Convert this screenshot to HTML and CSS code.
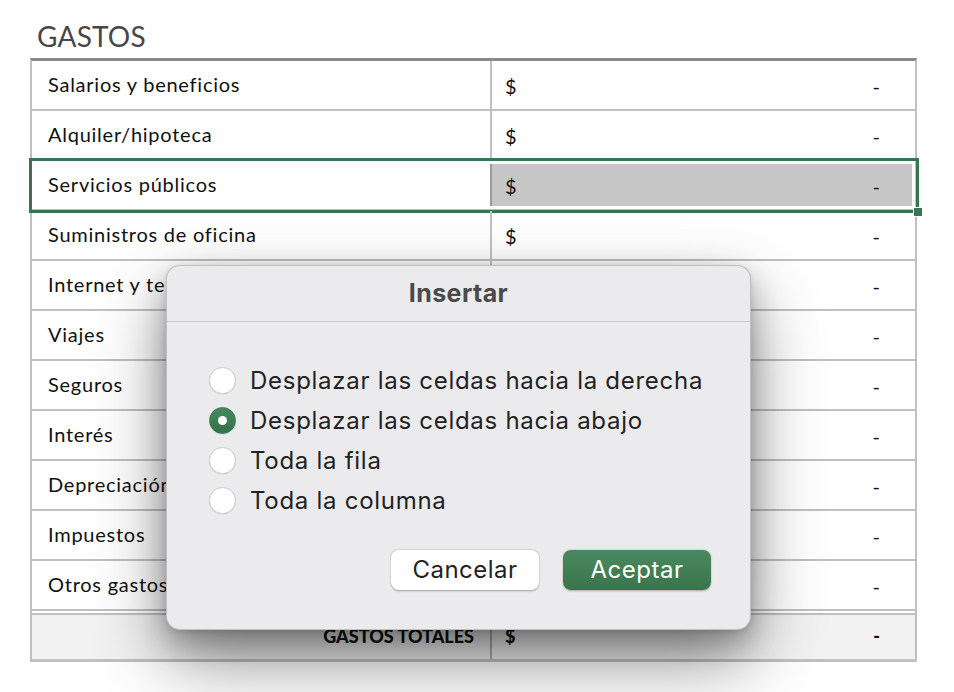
FILE: index.html
```html
<!DOCTYPE html>
<html lang="es">
<head>
<meta charset="utf-8">
<title>Gastos</title>
<link rel="stylesheet" href="styles.css">
</head>
<body>
<div class="sheet">
  <h1 class="title">GASTOS</h1>
  <div class="table">
    <div class="row"><div class="label">Salarios y beneficios</div><div class="amount"><span>$</span><span>-</span></div></div>
    <div class="row"><div class="label">Alquiler/hipoteca</div><div class="amount"><span>$</span><span>-</span></div></div>
    <div class="row selected"><div class="label">Servicios públicos</div><div class="amount"><span>$</span><span>-</span></div><div class="selbox"><span class="handle"></span></div></div>
    <div class="row"><div class="label">Suministros de oficina</div><div class="amount"><span>$</span><span>-</span></div></div>
    <div class="row"><div class="label">Internet y teléfono</div><div class="amount"><span>$</span><span>-</span></div></div>
    <div class="row"><div class="label">Viajes</div><div class="amount"><span>$</span><span>-</span></div></div>
    <div class="row"><div class="label">Seguros</div><div class="amount"><span>$</span><span>-</span></div></div>
    <div class="row"><div class="label">Interés</div><div class="amount"><span>$</span><span>-</span></div></div>
    <div class="row"><div class="label">Depreciación</div><div class="amount"><span>$</span><span>-</span></div></div>
    <div class="row"><div class="label">Impuestos</div><div class="amount"><span>$</span><span>-</span></div></div>
    <div class="row"><div class="label">Otros gastos</div><div class="amount"><span>$</span><span>-</span></div></div>
    <div class="row total"><div class="label">GASTOS TOTALES</div><div class="amount"><span>$</span><span>-</span></div></div>
  </div>
</div>

<div class="dialog">
  <div class="dialog-title">Insertar</div>
  <div class="dialog-body">
    <div class="options">
      <div class="option"><span class="radio"></span><span>Desplazar las celdas hacia la derecha</span></div>
      <div class="option"><span class="radio on"></span><span>Desplazar las celdas hacia abajo</span></div>
      <div class="option"><span class="radio"></span><span>Toda la fila</span></div>
      <div class="option"><span class="radio"></span><span>Toda la columna</span></div>
    </div>
    <div class="buttons">
      <button class="btn cancel">Cancelar</button>
      <button class="btn ok">Aceptar</button>
    </div>
  </div>
</div>
</body>
</html>
```
FILE: styles.css
```css
html, body {
  margin: 0;
  padding: 0;
  background: #ffffff;
}
body {
  width: 954px;
  height: 692px;
  overflow: hidden;
  position: relative;
  font-family: "Lato", "Liberation Sans", sans-serif;
}
.sheet {
  padding: 0 0 0 30px;
  width: 887px;
}
.title {
  margin: 0;
  padding: 20px 0 0 7px;
  height: 58px;
  box-sizing: border-box;
  font-weight: 400;
  font-size: 28px;
  line-height: 32px;
  color: #474747;
  letter-spacing: 0.2px;
}
.table {
  border-top: 3px solid #8a8a8a;
  border-left: 2px solid #c0c0c0;
  border-right: 2px solid #c0c0c0;
  border-bottom: 3px solid #c0c0c0;
  background: #fff;
}
.row {
  position: relative;
  display: grid;
  grid-template-columns: 458px 1fr;
  height: 48px;
  border-bottom: 2px solid #c0c0c0;
  font-size: 20px;
  letter-spacing: 0.75px;
  color: #111;
}
.label {
  display: flex;
  align-items: center;
  padding-left: 16px;
  padding-bottom: 3px;
  white-space: nowrap;
}
.amount {
  display: flex;
  align-items: center;
  justify-content: space-between;
  border-left: 2px solid #c0c0c0;
  padding: 2px 35px 0 13px;
  letter-spacing: 0;
}
.selected .amount {
  background: #c6c6c6;
  border-left-color: #9a9a9a;
  margin: 3px 3px 3px 0;
  padding-left: 13px;
  padding-right: 32px;
}
.selbox {
  position: absolute;
  left: -3px;
  right: -4px;
  top: -3px;
  bottom: -4px;
  border: 3px solid #3b7450;
  pointer-events: none;
}
.handle {
  position: absolute;
  right: -7px;
  bottom: -7px;
  width: 8px;
  height: 8px;
  background: #3b7450;
  border: 1px solid #fff;
}
.row.total {
  border-top: 2px solid #c0c0c0;
  margin-top: 2px;
  height: 44px;
  border-bottom: none;
  background: #f2f2f2;
  font-weight: 900;
  font-size: 18px;
  letter-spacing: 0;
}
.row.total .label {
  justify-content: flex-end;
  padding: 0 16px 3px 0;
}
.row.total .amount {
  border-left-color: #b0b0b0;
  padding-top: 0;
  padding-bottom: 2px;
}

/* dialog */
.dialog {
  position: absolute;
  left: 166px;
  top: 265px;
  width: 585px;
  height: 365px;
  box-sizing: border-box;
  background: #ebebed;
  border-radius: 14px;
  border: 1px solid rgba(0,0,0,0.18);
  box-shadow: 0 30px 70px rgba(0,0,0,0.45), 0 12px 28px rgba(0,0,0,0.22), 0 2px 6px rgba(0,0,0,0.1);
  font-family: "Inter", "Roboto", sans-serif;
  color: #222;
}
.dialog-title {
  height: 56px;
  border-bottom: 1px solid #c9c9cb;
  display: flex;
  align-items: center;
  justify-content: center;
  font-weight: 700;
  font-size: 25px;
  letter-spacing: 0.4px;
  color: #4a4a4a;
  padding-bottom: 1px;
  box-sizing: border-box;
}
.dialog-body {
  padding: 45px 39px 0 42px;
}
.options {
  display: flex;
  flex-direction: column;
  gap: 13px;
}
.option {
  display: flex;
  align-items: center;
  gap: 14px;
  height: 27px;
  font-size: 24px;
  letter-spacing: 0.72px;
  white-space: nowrap;
}
.radio {
  width: 27px;
  height: 27px;
  box-sizing: border-box;
  border-radius: 50%;
  background: #fff;
  border: 1px solid #cfcfcf;
  box-shadow: 0 0.5px 1px rgba(0,0,0,0.12);
  flex: none;
  position: relative;
}
.radio.on {
  background: linear-gradient(#468a5c, #35714a);
  border-color: #3b7a50;
}
.radio.on::after {
  content: "";
  position: absolute;
  left: 50%;
  top: 50%;
  width: 9px;
  height: 9px;
  margin: -4.5px 0 0 -4.5px;
  border-radius: 50%;
  background: #fff;
}
.buttons {
  display: flex;
  justify-content: flex-end;
  gap: 24px;
  margin-top: 36px;
}
.btn {
  width: 148px;
  height: 40px;
  border-radius: 8px;
  border: none;
  font-family: "Inter", "Roboto", sans-serif;
  font-size: 24px;
  letter-spacing: 0.5px;
  padding: 0 0 2px;
}
.cancel {
  background: #fff;
  color: #222;
  box-shadow: 0 0.5px 2px rgba(0,0,0,0.35);
}
.ok {
  background: linear-gradient(#4a8a60, #3a744a);
  color: #fff;
  box-shadow: 0 0.5px 2px rgba(0,0,0,0.3);
}
```
